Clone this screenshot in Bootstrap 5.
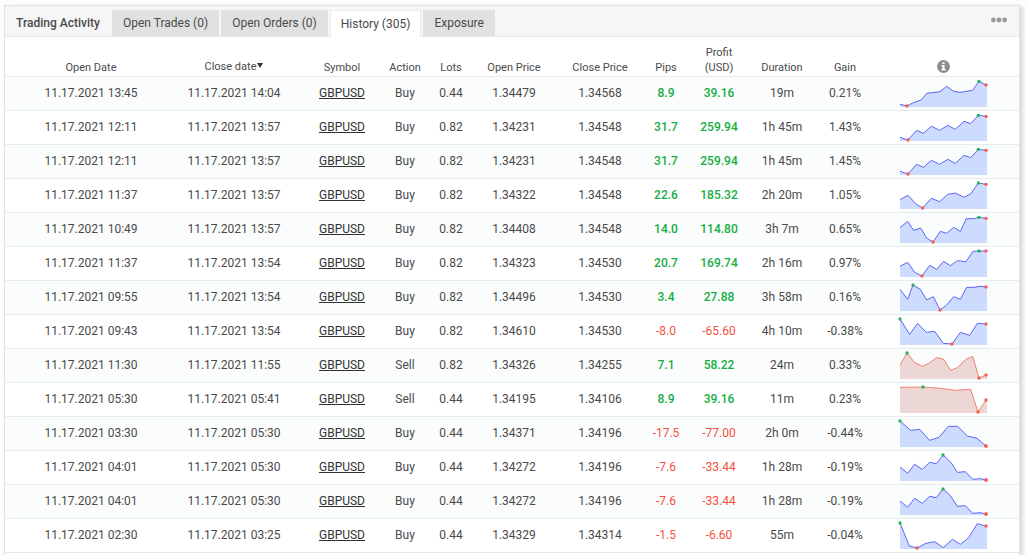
<!DOCTYPE html>
<html lang="en">
<head>
<meta charset="utf-8">
<meta name="viewport" content="width=device-width, initial-scale=1">
<title>Trading Activity</title>
<link href="https://cdn.jsdelivr.net/npm/bootstrap@5.3.0/dist/css/bootstrap.min.css" rel="stylesheet">
<style>
  body { font-family: Roboto, "Liberation Sans", sans-serif; font-size: 12px; line-height: 15px; color: #4a4a4a; background: #fdfdfd; }
  .activity { border: 1px solid #e2e2e2; border-bottom: 0; box-shadow: 3px 2px 4px rgba(0, 0, 0, .14); margin: 5px 6px 0 4px; }
  .activity-head { background: #f6f6f6; border-bottom: 1px solid #e8e8e8; height: 31px; padding-left: 11px; }
  .activity-title { font-size: 12px; font-weight: 500; line-height: 26px; margin: 0; width: 96px; }
  .activity-tabs { gap: 2px; }
  .activity-tabs .nav-link { background: #e1e1e1; border: 0; border-radius: 0; color: #4a4a4a; height: 26px; line-height: 26px; padding: 0 11px; }
  .activity-tabs .nav-link.active { background: #fff; border: 1px solid #ececec; border-bottom: 0; color: #4a4a4a; height: 27px; line-height: 24px; margin-bottom: -1px; padding: 0 10px; }
  .more-btn { line-height: 0; padding: 5px 12px; }
  .history { --bs-table-bg: transparent; table-layout: fixed; }
  .history > :not(caption) > * > * { color: #4a4a4a; border-bottom: 1px solid #e3edf1; padding: 0; text-align: center; vertical-align: middle; white-space: nowrap; }
  .history > thead > tr > th { font-size: 11px; font-weight: 400; height: 39px; padding-bottom: 1px; vertical-align: bottom; }
  .history > tbody > tr > td { height: 34px; }
  .history > tbody > tr:nth-child(odd) { background: #fbfdfc; }
  .history > * > tr > :first-child { padding-left: 14px; }
  .history > * > tr > :last-child { padding-right: 8px; }
  .history a { color: #333; }
  .history > tbody > tr > td.gain { color: #14ae43; font-weight: 500; }
  .history > tbody > tr > td.loss { color: #f4513f; }
  .sort-btn { color: inherit; display: block; font-size: 11px; line-height: 15px; margin: 0 auto 1px; }
  .spark { display: block; height: 33px; margin: 0 auto; width: 93px; }
</style>
</head>
<body class="d-flex flex-column min-vh-100">
<main class="activity bg-white flex-grow-1">
  <header class="activity-head d-flex align-items-start justify-content-between">
    <div class="d-flex align-items-end h-100">
      <h1 class="activity-title">Trading Activity</h1>
      <div class="nav activity-tabs align-items-end flex-nowrap" role="tablist">
        <button class="nav-link" type="button" role="tab">Open Trades (0)</button>
        <button class="nav-link" type="button" role="tab">Open Orders (0)</button>
        <button class="nav-link active" type="button" role="tab" aria-selected="true">History (305)</button>
        <button class="nav-link" type="button" role="tab">Exposure</button>
      </div>
    </div>
    <button class="more-btn btn border-0" type="button" aria-label="More">
      <svg width="16" height="18" viewBox="0 0 16 18" fill="#999"><circle cx="2.4" cy="9" r="2.4"/><circle cx="8" cy="9" r="2.4"/><circle cx="13.6" cy="9" r="2.4"/></svg>
    </button>
  </header>
  <table class="table history mb-0">
    <colgroup>
      <col width="158"><col width="142"><col width="74"><col width="52"><col width="40"><col width="86"><col width="86"><col width="46"><col width="60"><col width="66"><col width="60"><col width="144">
    </colgroup>
    <thead>
      <tr>
        <th scope="col">Open Date</th>
        <th scope="col"><button class="sort-btn btn border-0 p-0" type="button">Close date<svg width="7" height="9" viewBox="0 0 7 9" fill="#333"><path d="M1 1h6L4 6z"/></svg></button></th>
        <th scope="col">Symbol</th>
        <th scope="col">Action</th>
        <th scope="col">Lots</th>
        <th scope="col">Open Price</th>
        <th scope="col">Close Price</th>
        <th scope="col">Pips</th>
        <th scope="col">Profit<br>(USD)</th>
        <th scope="col">Duration</th>
        <th scope="col">Gain</th>
        <th scope="col"><svg width="13" height="17" viewBox="0 0 13 17" role="img" aria-label="Chart information"><circle cx="6.5" cy="8.5" r="6.4" fill="#8c8c8c"/><path d="M5.4 4.2h2.2v1.9H5.4zM4.5 7.1h3.1v3.9h1v1.4H4.4V11h1V8.5h-.9z" fill="#fff"/></svg></th>
      </tr>
    </thead>
    <tbody id="trades"></tbody>
  </table>
</main>
<script src="https://cdn.jsdelivr.net/npm/bootstrap@5.3.0/dist/js/bootstrap.bundle.min.js"></script>
<script>
  // open, close, action, lots, open price, close price, pips, profit, duration, gain, chart points
  const trades = [
    ['13:45','14:04','Buy','0.44','1.34479','1.34568','8.9','39.16','19m','0.21%','0,82 21,87 40,77 64,69 80,49 120,44 140,28 161,43 180,46 218,40 237,13 258,24'],
    ['12:11','13:57','Buy','0.82','1.34231','1.34548','31.7','259.94','1h 45m','1.43%','0,79 24,87 50,58 70,67 94,46 119,58 143,43 166,55 192,31 212,38 235,13 258,16'],
    ['12:11','13:57','Buy','0.82','1.34231','1.34548','31.7','259.94','1h 45m','1.45%','0,79 24,87 50,58 70,67 94,46 119,58 143,43 166,55 192,31 212,38 235,13 258,16'],
    ['11:37','13:57','Buy','0.82','1.34322','1.34548','22.6','185.32','2h 20m','1.05%','0,62 24,49 50,77 68,87 94,58 119,68 143,46 166,42 192,55 212,45 235,12 258,16'],
    ['10:49','13:57','Buy','0.82','1.34408','1.34548','14.0','114.80','3h 7m','0.65%','0,44 23,25 41,52 62,45 80,75 99,87 121,55 140,61 161,43 181,55 199,17 222,17 237,13 258,16'],
    ['11:37','13:54','Buy','0.82','1.34323','1.34530','20.7','169.74','2h 16m','0.97%','0,58 23,46 44,76 66,87 89,55 110,67 131,43 151,56 172,41 198,44 219,13 237,12 258,12'],
    ['09:55','13:54','Buy','0.82','1.34496','1.34530','3.4','27.88','3h 58m','0.16%','0,25 23,55 39,12 61,25 80,57 100,47 120,87 140,72 161,47 181,55 200,19 222,19 240,16 258,18'],
    ['09:43','13:54','Buy','0.82','1.34610','1.34530','-8.0','-65.60','4h 10m','-0.38%','0,12 29,58 53,25 79,52 104,49 130,85 156,87 181,52 209,61 232,25 258,27'],
    ['11:30','11:55','Sell','0.82','1.34326','1.34255','7.1','58.22','24m','0.33%','0,48 21,12 43,40 67,52 88,42 109,26 130,30 152,64 172,56 196,32 218,22 237,87 258,78'],
    ['05:30','05:41','Sell','0.44','1.34195','1.34106','8.9','39.16','11m','0.23%','0,13 69,12 120,16 166,22 212,19 234,87 258,51'],
    ['03:30','05:30','Buy','0.44','1.34371','1.34196','-17.5','-77.00','2h 0m','-0.44%','0,12 32,40 59,37 89,70 117,61 145,28 173,28 202,57 231,64 258,87'],
    ['04:01','05:30','Buy','0.44','1.34272','1.34196','-7.6','-33.44','1h 28m','-0.19%','0,48 23,67 44,40 67,55 89,34 109,38 129,12 152,33 172,64 196,62 218,85 240,83 258,87'],
    ['04:01','05:30','Buy','0.44','1.34272','1.34196','-7.6','-33.44','1h 28m','-0.19%','0,48 23,67 44,40 67,55 89,34 109,38 129,12 152,33 172,64 196,62 218,85 240,83 258,87'],
    ['02:30','03:25','Buy','0.44','1.34329','1.34314','-1.5','-6.60','55m','-0.04%','0,12 28,81 51,87 78,73 104,68 130,86 157,61 181,76 206,56 232,14 258,21']
  ];

  // Area chart with the highest point in green, the lowest and the last in red
  function spark(points, action) {
    const list = points.split(' ').map(p => p.split(',').map(Number));
    const ys = list.map(p => p[1]);
    const high = list[ys.indexOf(Math.min(...ys))];
    const low = list[ys.indexOf(Math.max(...ys))];
    const last = list[list.length - 1];
    const [line, fill] = action === 'Buy' ? ['#5b66f5', '#cddcfe'] : ['#f0806f', '#ecd6d6'];
    const dot = (p, c) => `<circle cx="${p[0]}" cy="${p[1]}" r="5" fill="${c}"/>`;
    return `<svg class="spark" viewBox="-9 0 279 99" aria-hidden="true">
      <polygon points="0,90 ${points} 261,${last[1]} 261,90" fill="${fill}"/>
      <polyline points="${points}" fill="none" stroke="${line}" stroke-width="3"/>
      ${dot(low, '#f75c4c')}${dot(last, '#f75c4c')}${dot(high, '#27b35a')}</svg>`;
  }

  document.getElementById('trades').innerHTML = trades.map(t => {
    const tone = t[6].startsWith('-') ? 'loss' : 'gain';
    return `<tr><td>11.17.2021 ${t[0]}</td><td>11.17.2021 ${t[1]}</td><td><a href="#">GBPUSD</a></td>
      <td>${t[2]}</td><td>${t[3]}</td><td>${t[4]}</td><td>${t[5]}</td>
      <td class="${tone}">${t[6]}</td><td class="${tone}">${t[7]}</td>
      <td>${t[8]}</td><td>${t[9]}</td><td>${spark(t[10], t[2])}</td></tr>`;
  }).join('');
</script>
</body>
</html>
